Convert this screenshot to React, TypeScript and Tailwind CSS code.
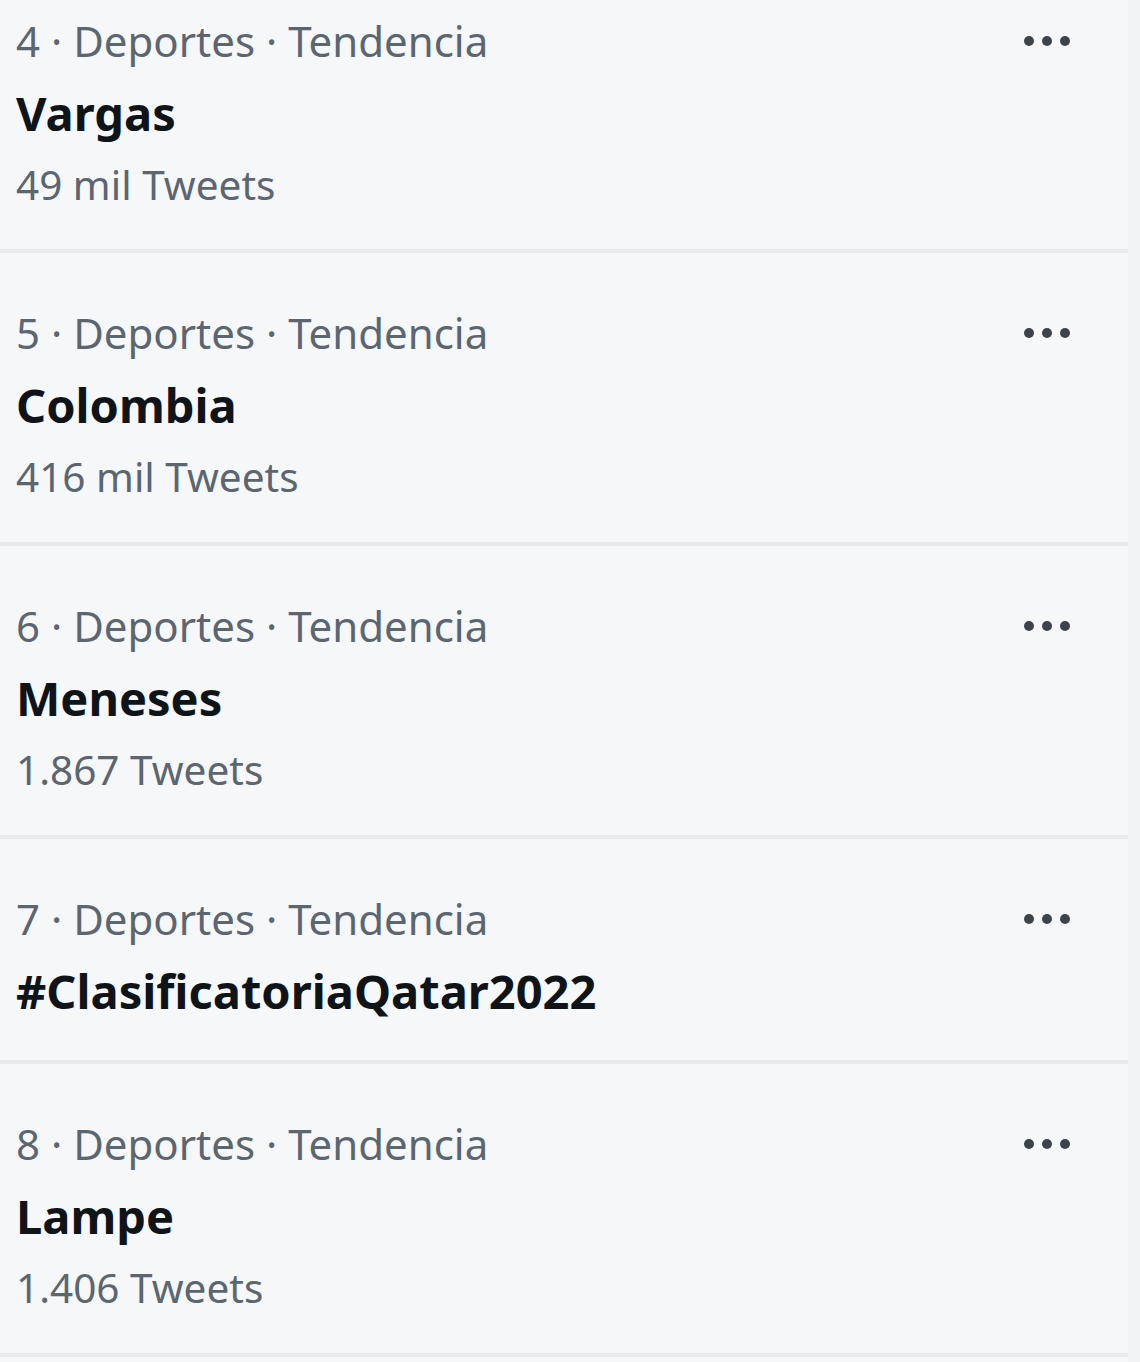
type Trend = {
  rank: number;
  name: string;
  count?: string;
};

const trends: Trend[] = [
  { rank: 4, name: "Vargas", count: "49 mil Tweets" },
  { rank: 5, name: "Colombia", count: "416 mil Tweets" },
  { rank: 6, name: "Meneses", count: "1.867 Tweets" },
  { rank: 7, name: "#ClasificatoriaQatar2022" },
  { rank: 8, name: "Lampe", count: "1.406 Tweets" },
];

function MoreDots() {
  return (
    <div className="flex items-center gap-[8px] pr-[58px]">
      <span className="h-[10px] w-[10px] rounded-full bg-[#3d434a]" />
      <span className="h-[10px] w-[10px] rounded-full bg-[#3d434a]" />
      <span className="h-[10px] w-[10px] rounded-full bg-[#3d434a]" />
    </div>
  );
}

function TrendRow({ trend, first }: { trend: Trend; first: boolean }) {
  // first row is cut off at the top of the screenshot
  const pad = first
    ? "pt-[5px] pb-[28px]"
    : trend.count
      ? "pt-[44px] pb-[29px]"
      : "pt-[44px] pb-[33px]";

  return (
    <div className={`border-b-4 border-[#e7e9ec] pl-[16px] ${pad}`}>
      <div className="flex items-center justify-between">
        <span className="text-[42px] leading-[72px] text-[#5b6670]">
          {trend.rank} · Deportes · Tendencia
        </span>
        <MoreDots />
      </div>
      <div className="text-[47px] font-bold leading-[72px] text-[#0f1419]">
        {trend.name}
      </div>
      {trend.count && (
        <div className="text-[40.5px] leading-[72px] text-[#5b6670]">
          {trend.count}
        </div>
      )}
    </div>
  );
}

export default function App() {
  return (
    <div
      className="flex h-[1362px] w-[1140px] overflow-hidden bg-[#f2f3f5]"
      style={{ fontFamily: '"Noto Sans", "Open Sans", sans-serif' }}
    >
      <div className="w-[1128px] bg-[#f5f7f9]">
        {trends.map((t, i) => (
          <TrendRow key={t.rank} trend={t} first={i === 0} />
        ))}
      </div>
    </div>
  );
}
